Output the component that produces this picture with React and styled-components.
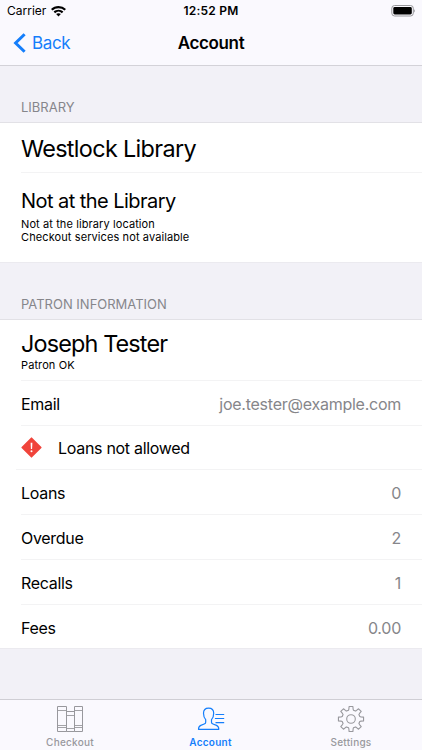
import React from 'react';
import styled, { createGlobalStyle } from 'styled-components';

const GlobalStyle = createGlobalStyle`
    * {
        box-sizing: border-box;
    }
    body {
        margin: 0;
        background: #f2f1f7;
        color: #000;
        font-family: Inter, "Liberation Sans", sans-serif;
    }
`

const Screen = styled.div`
    display: flex;
    flex-direction: column;
    width: 422px;
    height: 750px;
    overflow: hidden;
    background: #f2f1f7;
`

const Header = styled.header`
    height: 66px;
    background: #faf9fe;
    border-bottom: 1px solid #d3d2d8;
`

const StatusBar = styled.div`
    display: grid;
    grid-template-columns: 1fr auto 1fr;
    align-items: center;
    height: 22px;
    padding: 0 7px 0 7px;
    font-size: 12px;
    line-height: 22px;
`

const Carrier = styled.div`
    display: flex;
    align-items: center;
    gap: 5px;
    letter-spacing: 0;
`

const Clock = styled.div`
    font-weight: 600;
    letter-spacing: 0.2px;
`

const Battery = styled.div`
    display: flex;
    justify-content: flex-end;
`

const NavBar = styled.nav`
    display: grid;
    grid-template-columns: 1fr auto 1fr;
    align-items: center;
    height: 42px;
    padding: 0 13px;
`

const BackLink = styled.a`
    display: flex;
    align-items: center;
    gap: 6px;
    color: #147efb;
    font-size: 17px;
    letter-spacing: -0.35px;
`

const Title = styled.h1`
    margin: 0;
    font-size: 17px;
    font-weight: 600;
    letter-spacing: -0.35px;
`

const Content = styled.main`
    flex: 1;
`

const SectionTitle = styled.h2`
    display: flex;
    align-items: flex-end;
    height: 57px;
    margin: 0;
    padding: 0 21px 7px;
    border-bottom: 1px solid #e2e1e6;
    color: #86868b;
    font-size: 13px;
    font-weight: 400;
    line-height: 16px;
    text-transform: uppercase;
`

const Group = styled.div`
    background: #fff;
`

const Row = styled.div`
    display: flex;
    align-items: center;
    height: ${props => props.$height}px;
    margin-left: ${props => (props.$last ? 0 : props.$inset || 21)}px;
    padding-top: ${props => props.$top || 0}px;
    padding-bottom: ${props => props.$bottom || 0}px;
    padding-left: ${props => (props.$last ? 21 : 21 - (props.$inset || 21))}px;
    padding-right: 21px;
    border-bottom: 1px solid ${props => (props.$last ? '#ebeaef' : '#f3f3f4')};
`

const Stack = styled.div`
    display: flex;
    flex-direction: column;
`

const Name = styled.div`
    margin-bottom: ${props => props.$gap || 0}px;
    font-size: ${props => props.$size}px;
    line-height: ${props => props.$line}px;
    letter-spacing: ${props => props.$spacing}px;
`

const Note = styled.div`
    font-size: 11px;
    line-height: 13px;
    letter-spacing: 0.1px;
`

const Label = styled.span`
    font-size: 16px;
    letter-spacing: -0.3px;
`

const Value = styled.span`
    margin-left: auto;
    color: #86868a;
    font-size: 16px;
    letter-spacing: -0.25px;
`

const Alert = styled.span`
    display: flex;
    width: 37px;
`

const TabBar = styled.footer`
    display: grid;
    grid-template-columns: 140px 141px 140px;
    height: 51px;
    padding: 5px 0 0;
    background: #faf9fe;
    border-top: 1px solid #cfced4;
`

const Tab = styled.a`
    display: flex;
    flex-direction: column;
    align-items: center;
    gap: 2px;
    color: ${props => (props.$active ? '#147efb' : '#98989d')};
    font-size: 10px;
    font-weight: ${props => (props.$active ? 600 : 500)};
    line-height: 15px;
    letter-spacing: 0.25px;
`

const WifiIcon = () => (
    <svg width="15" height="11" viewBox="0 0 15 11">
        <path d="M7.5 0C4.6 0 2 1.1 0 3l1.5 1.6A8.700 8.700 0 0 1 13.500 4.600L15 3A10.900 10.900 0 0 0 7.500 0z" />
        <path d="M7.500 3.700c-1.900 0-3.600.7-4.900 1.900l1.500 1.600a5 5 0 0 1 6.800 0l1.500-1.600a7.200 7.200 0 0 0-4.900-1.900z" />
        <path d="M7.500 7.200c-.9 0-1.700.3-2.400.9l2.400 2.500 2.400-2.500c-.7-.6-1.500-.9-2.400-.9z" />
    </svg>
)

const BatteryIcon = () => (
    <svg width="24" height="12" viewBox="0 0 24 12">
        <rect x=".8" y=".5" width="21.500" height="10.500" rx="2.800" fill="none" stroke="#97979b" />
        <rect x="2.300" y="2" width="18.500" height="7.500" rx="1.400" />
        <path d="M23.200 4.200v3.200c.5-.3.800-.9.800-1.600s-.3-1.300-.8-1.600z" fill="#97979b" />
    </svg>
)

const BackIcon = () => (
    <svg width="13" height="20" viewBox="0 0 13 20" fill="none" stroke="currentColor" strokeWidth="3">
        <path d="M11.600 1.200L2.600 10l9 8.800" />
    </svg>
)

const AlertIcon = () => (
    <svg width="21" height="21" viewBox="0 0 21 21">
        <path d="M10.500 1.200l9.300 9.300-9.300 9.300-9.300-9.300z" fill="#f0443b" stroke="#f0443b" strokeWidth="1.600" strokeLinejoin="round" />
        <path d="M9.600 5.800h1.800l-.3 6.100H9.900z" fill="#fff" />
        <circle cx="10.500" cy="14.200" r="1" fill="#fff" />
    </svg>
)

const CheckoutIcon = () => (
    <svg width="28" height="28" viewBox="0 0 28 28" fill="none" stroke="currentColor" strokeLinejoin="round">
        <path d="M1.500 1.500h9v25h-9zM10.500 6.500h8v20h-8zM18.500 1.500h8v25h-8z" />
        <path d="M1.500 5.500h9M1.500 20.500h9M1.500 22.500h9M10.500 10.500h8M10.500 23.500h8M18.500 5.500h8M18.500 20.500h8M18.500 22.500h8" strokeWidth=".9" />
    </svg>
)

const AccountIcon = () => (
    <svg width="28" height="28" viewBox="0 0 28 28" fill="none" stroke="currentColor" strokeWidth="1.200" strokeLinejoin="round">
        <path d="M11.600 3.200c-3.300 0-5.100 2.200-5.100 5.100 0 2.700.9 5 2.200 6.300v2.600c0 1-.5 1.400-1.500 1.800l-3.400 1.400c-1.700.7-2.300 1.900-2.300 3.900h20.300c0-2-.6-3.200-2.300-3.900L16 19c-1-.4-1.500-.8-1.500-1.800v-2.600c1.300-1.300 2.200-3.600 2.200-6.300 0-2.900-1.800-5.100-5.100-5.100z" />
        <path d="M18.500 9.500h8.700M17.900 13.500h9.300M18.500 17.700h8.700" />
    </svg>
)

// eight teeth, each one a flat tip on a wider foot
const gearPoints = () => {
    const points = [];
    for (let i = 0; i < 8; i++) {
        [[-0.27, 9.1], [-0.21, 10.2], [-0.15, 12.7], [0.15, 12.7], [0.21, 10.2], [0.27, 9.1]].forEach(([offset, radius]) => {
            const angle = (i * Math.PI) / 4 + offset;
            points.push(`${(14 + radius * Math.sin(angle)).toFixed(2)},${(14 - radius * Math.cos(angle)).toFixed(2)}`);
        });
    }
    return points.join(' ');
}

const SettingsIcon = () => (
    <svg width="28" height="28" viewBox="0 0 28 28" fill="none" stroke="currentColor" strokeWidth="1.100" strokeLinejoin="round">
        <polygon points={gearPoints()} />
        <circle cx="14" cy="14" r="4.300" />
    </svg>
)

const totals = [
    { label: 'Loans', value: '0' },
    { label: 'Overdue', value: '2' },
    { label: 'Recalls', value: '1' },
    { label: 'Fees', value: '0.00' },
]

export default function App() {
    return (
        <Screen>
            <GlobalStyle />
            <Header>
                <StatusBar>
                    <Carrier>Carrier <WifiIcon /></Carrier>
                    <Clock>12:52 PM</Clock>
                    <Battery><BatteryIcon /></Battery>
                </StatusBar>
                <NavBar>
                    <BackLink><BackIcon />Back</BackLink>
                    <Title>Account</Title>
                </NavBar>
            </Header>
            <Content>
                <SectionTitle>Library</SectionTitle>
                <Group>
                    <Row $height={50} $top={3}>
                        <Name $size={23.4} $line={30} $spacing={-0.66}>Westlock Library</Name>
                    </Row>
                    <Row $height={90} $bottom={4} $last>
                        <Stack>
                            <Name $size={20} $line={28} $gap={3} $spacing={-0.55}>Not at the Library</Name>
                            <Note>Not at the library location</Note>
                            <Note>Checkout services not available</Note>
                        </Stack>
                    </Row>
                </Group>
                <SectionTitle>Patron Information</SectionTitle>
                <Group>
                    <Row $height={61}>
                        <Stack>
                            <Name $size={23.4} $line={30} $spacing={-0.85}>Joseph Tester</Name>
                            <Note>Patron OK</Note>
                        </Stack>
                    </Row>
                    <Row $height={45} $top={2}>
                        <Label>Email</Label>
                        <Value>joe.tester@example.com</Value>
                    </Row>
                    <Row $height={44} $inset={16}>
                        <Alert><AlertIcon /></Alert>
                        <Label>Loans not allowed</Label>
                    </Row>
                    {totals.map((item, i) => (
                        <Row key={item.label} $height={i === totals.length - 1 ? 44 : 45} $top={2} $last={i === totals.length - 1}>
                            <Label>{item.label}</Label>
                            <Value>{item.value}</Value>
                        </Row>
                    ))}
                </Group>
            </Content>
            <TabBar>
                <Tab><CheckoutIcon />Checkout</Tab>
                <Tab $active><AccountIcon />Account</Tab>
                <Tab><SettingsIcon />Settings</Tab>
            </TabBar>
        </Screen>
    )
}
